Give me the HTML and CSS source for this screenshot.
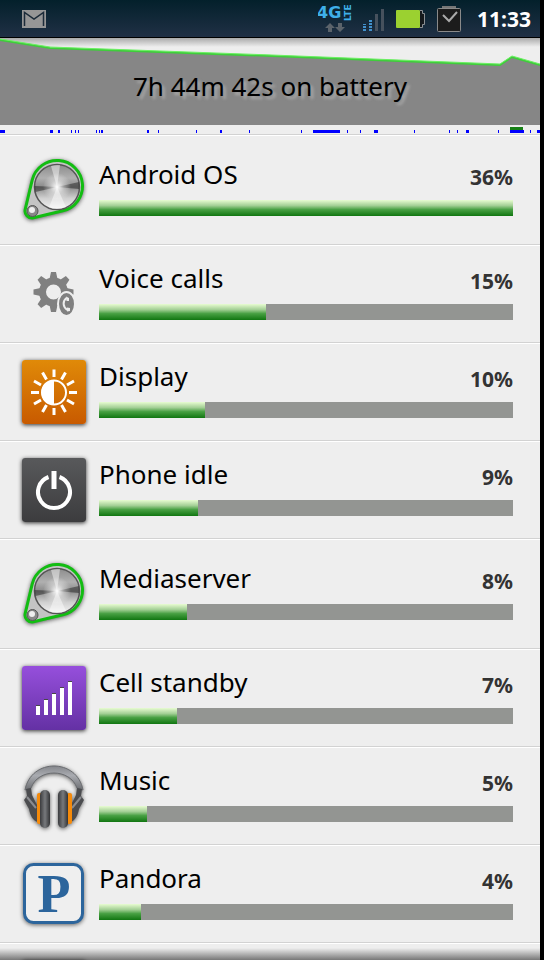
FILE: index.html
```html
<!DOCTYPE html>
<html lang="en">
<head>
  <meta charset="UTF-8" />
  <meta name="viewport" content="width=device-width, initial-scale=1.0" />
  <title>Battery use</title>
  <link rel="stylesheet" href="styles.css">
</head>
<body>
  <!-- shared gradients and the app icon that is used twice -->
  <svg class="defs" width="0" height="0" aria-hidden="true">
    <defs>
      <linearGradient id="metal" x1="0" y1="0" x2="0" y2="1">
        <stop offset="0" stop-color="#8c8c8c" />
        <stop offset="0.3" stop-color="#b0b0b0" />
        <stop offset="0.5" stop-color="#8a8a8a" />
        <stop offset="0.75" stop-color="#d0d0d0" />
        <stop offset="1" stop-color="#f4f4f4" />
      </linearGradient>
      <radialGradient id="shine">
        <stop offset="0" stop-color="#fff" />
        <stop offset="0.5" stop-color="#fff" stop-opacity="0.4" />
        <stop offset="1" stop-color="#fff" stop-opacity="0" />
      </radialGradient>
      <linearGradient id="band" x1="0" y1="0" x2="0" y2="1">
        <stop offset="0" stop-color="#85878c" />
        <stop offset="0.4" stop-color="#a9abb0" />
        <stop offset="1" stop-color="#6c6e72" />
      </linearGradient>
      <linearGradient id="cup" x1="0" y1="0" x2="1" y2="0">
        <stop offset="0" stop-color="#3a3b3e" />
        <stop offset="0.5" stop-color="#77797c" />
        <stop offset="1" stop-color="#333436" />
      </linearGradient>
      <symbol id="belt" viewBox="0 0 64 64">
        <path d="M10.200 22.100A25.500 25.500 0 1 1 40.900 52.800L11.600 59.800A7 7 0 0 1 3.200 51.400Z" fill="#c4c4c4" stroke="#12bd12" stroke-width="3" stroke-linejoin="round" />
        <circle cx="35" cy="29" r="22.500" fill="url(#metal)" stroke="#555" stroke-width="1.500" />
        <path d="M35 29L12.500 28A22 22 0 0 0 13.500 34Z M35 29L57 24A22 22 0 0 1 57 31Z" fill="#222" opacity="0.5" />
        <path d="M35 29L29 8A22 22 0 0 1 38 7Z M35 29L27 49.500A22 22 0 0 0 44 49Z" fill="#fff" opacity="0.45" />
        <circle cx="35" cy="29" r="14" fill="url(#shine)" />
        <circle cx="10.500" cy="53" r="5.500" fill="#888" stroke="#555" />
        <circle cx="10" cy="52" r="3" fill="#eee" />
      </symbol>
    </defs>
  </svg>

  <div class="screen">
    <header class="status-bar">
      <svg class="mail" width="24" height="18" viewBox="0 0 24 18" role="img" aria-label="New mail">
        <rect width="24" height="18" fill="#969696" />
        <path d="M2.500 16V2.500L12 9L21.500 2.500V16" fill="none" stroke="#1c2b39" stroke-width="1.500" />
      </svg>
      <svg class="network" width="36" height="30" viewBox="0 0 36 30">
        <text x="-1" y="14" class="net-type">4G</text>
        <text x="-17" y="33" class="net-lte" transform="rotate(-90)">LTE</text>
        <path d="M12 19L17 24H14V28H10V24H7Z M22 28L27 23H24V19H20V23H17Z" fill="#5b636b" />
      </svg>
      <svg class="signal" width="22" height="22" viewBox="0 0 22 22" role="img" aria-label="Signal strength">
        <path d="M1.500 22V15M7.500 22V10" stroke="#4291cc" stroke-width="3" stroke-dasharray="2 1" />
        <path d="M13.500 22V5M19.500 22V0" stroke="#46515d" stroke-width="3" />
      </svg>
      <svg class="battery" width="30" height="18" viewBox="0 0 30 18" role="img" aria-label="Battery level">
        <rect width="24" height="18" rx="1" fill="#9bd130" />
        <path d="M24 0.500H26.500V3.500H28.500V14.500H26.500V17.500H24" fill="#15191c" stroke="#8c9094" />
      </svg>
      <svg class="task" width="24" height="26" viewBox="0 0 24 26" role="img" aria-label="Tasks">
        <rect x="5" y="0" width="14" height="3" fill="#777" />
        <rect x="0.500" y="2.500" width="23" height="23" rx="1" fill="#1c1c1c" stroke="#8a8a8a" />
        <path d="M6 9L12 15L20 6" fill="none" stroke="#aaa" stroke-width="2" />
      </svg>
      <time class="clock">11:33</time>
    </header>

    <section class="history">
      <div class="graph">
        <svg class="curve" viewBox="0 0 540 87" preserveAspectRatio="none" aria-hidden="true">
          <path d="M0 2L50 10L272 18L500 27L512 19L540 27V87H0Z" fill="#868686" />
          <path d="M0 2L50 10L272 18L500 27L512 19L540 27" fill="none" stroke="#3fce3b" stroke-width="2" />
          <path d="M0 1L50 9L272 17L500 26L512 18L540 26" fill="none" stroke="#6cf063" stroke-width="1" />
        </svg>
        <h1 class="duration">7h 44m 42s on battery</h1>
      </div>
      <svg class="ticks" viewBox="0 0 540 9" preserveAspectRatio="none" aria-hidden="true">
        <path d="M0 5h5v3h-5zM50 5h3v3h-3zM58 5h2v3h-2zM71 5h1v3h-1zM75 5h1v3h-1zM78 5h1v3h-1zM96 5h1v3h-1zM99 5h1v3h-1zM101 5h2v3h-2zM147 5h2v3h-2zM158 5h1v3h-1zM196 5h1v3h-1zM220 5h2v3h-2zM249 5h1v3h-1zM301 5h1v3h-1zM313 5h27v3h-27zM347 5h1v3h-1zM360 5h1v3h-1zM374 5h4v3h-4zM414 5h1v3h-1zM449 5h1v3h-1zM457 5h1v3h-1zM466 5h3v3h-3zM498 5h1v3h-1zM510 5h14v3h-14zM530 5h1v3h-1zM537 5h3v3h-3z" fill="#00f" />
        <path d="M510 2h13v3h-13z" fill="#168016" />
      </svg>
    </section>

    <ul class="usage-list">
      <li class="usage tall">
        <svg class="icon glow" aria-hidden="true"><use href="#belt" /></svg>
        <div class="details">
          <div class="label"><span class="name">Android OS</span><span class="percent">36%</span></div>
          <div class="bar"><div class="fill" style="width: 100%"></div></div>
        </div>
      </li>
      <li class="usage">
        <svg class="icon" viewBox="0 0 64 64" aria-hidden="true">
          <g transform="translate(31.500 30)" fill="#808080">
            <circle r="11" fill="none" stroke="#808080" stroke-width="7" />
            <g id="teeth">
              <path d="M-4 -13L-2.500 -20H2.500L4 -13Z" />
              <path d="M-4 13L-2.500 20H2.500L4 13Z" />
              <path d="M-13 -4L-20 -2.500V2.500L-13 4Z" />
              <path d="M13 -4L20 -2.500V2.500L13 4Z" />
            </g>
            <use href="#teeth" transform="rotate(45)" />
          </g>
          <ellipse cx="44.500" cy="42" rx="8.500" ry="12" fill="#808080" stroke="#eee" stroke-width="2" />
          <path d="M44.500 36C40.500 39 40.500 45 45.500 48" fill="none" stroke="#eee" stroke-width="2" />
          <path d="M44 34.500L47 36V39H44.500ZM45 45.500L48 46V49L45 49.500Z" fill="#eee" />
        </svg>
        <div class="details">
          <div class="label"><span class="name">Voice calls</span><span class="percent">15%</span></div>
          <div class="bar"><div class="fill" style="width: 40.3%"></div></div>
        </div>
      </li>
      <li class="usage">
        <svg class="icon tile orange" viewBox="0 0 64 64" aria-hidden="true">
          <g fill="none" stroke="#fff" stroke-width="3">
            <path d="M32 9.500V17M32 48V55M9 32.500H17M47 32.500H55M20.500 12.500L24.500 19.500M43.500 12.500L39.500 19.500M20.500 52L24.500 45M43.500 52L39.500 45M12 21L19 25M52 21L45 25M12 44L19 40M52 44L45 40" />
            <circle cx="32" cy="32.500" r="12" stroke-width="2" />
          </g>
          <path d="M32 20A12.500 12.500 0 0 0 32 45Z" fill="#fff" />
        </svg>
        <div class="details">
          <div class="label"><span class="name">Display</span><span class="percent">10%</span></div>
          <div class="bar"><div class="fill" style="width: 25.6%"></div></div>
        </div>
      </li>
      <li class="usage">
        <svg class="icon tile dark" viewBox="0 0 64 64" aria-hidden="true">
          <g fill="none" stroke="#fff" stroke-width="4">
            <path d="M26.500 19A16 16 0 1 0 37.500 19" />
            <path d="M32 13V31" stroke-width="5" />
          </g>
        </svg>
        <div class="details">
          <div class="label"><span class="name">Phone idle</span><span class="percent">9%</span></div>
          <div class="bar"><div class="fill" style="width: 23.9%"></div></div>
        </div>
      </li>
      <li class="usage tall">
        <svg class="icon glow" aria-hidden="true"><use href="#belt" /></svg>
        <div class="details">
          <div class="label"><span class="name">Mediaserver</span><span class="percent">8%</span></div>
          <div class="bar"><div class="fill" style="width: 21.3%"></div></div>
        </div>
      </li>
      <li class="usage">
        <svg class="icon tile purple" viewBox="0 0 64 64" aria-hidden="true">
          <path d="M14 40h4M22 34h4M30 28h4M38 22h4M46 16h4" stroke="#474747" stroke-width="2" />
          <path d="M14 40h4v9h-4zM22 34h4v15h-4zM30 28h4v21h-4zM38 22h4v27h-4zM46 16h4v33h-4z" fill="#fff" />
        </svg>
        <div class="details">
          <div class="label"><span class="name">Cell standby</span><span class="percent">7%</span></div>
          <div class="bar"><div class="fill" style="width: 18.8%"></div></div>
        </div>
      </li>
      <li class="usage">
        <svg class="icon glow" viewBox="0 0 64 64" aria-hidden="true">
          <path d="M3 26C9 -6 55 -6 61 26L55 24C48 4 16 4 9 24Z" fill="url(#band)" stroke="#6a6c70" />
          <path d="M4 25L9 24L10 31L16 43V58C11 57 8 51 7 45L2 36L5 32Z" fill="#4b4c4f" />
          <path d="M60 25L55 24L54 31L48 43V58C53 57 56 51 57 45L62 36L59 32Z" fill="#4b4c4f" />
          <path d="M5 33L14 44M59 33L50 44" stroke="#8a8b8f" stroke-width="2" />
          <rect x="15" y="29" width="5" height="31" rx="2" fill="#f58a0a" />
          <rect x="45" y="29" width="5" height="31" rx="2" fill="#f58a0a" />
          <rect x="18" y="26" width="10" height="38" rx="5" fill="url(#cup)" />
          <rect x="36" y="26" width="10" height="38" rx="5" fill="url(#cup)" />
        </svg>
        <div class="details">
          <div class="label"><span class="name">Music</span><span class="percent">5%</span></div>
          <div class="bar"><div class="fill" style="width: 11.6%"></div></div>
        </div>
      </li>
      <li class="usage">
        <svg class="icon glow" viewBox="0 0 64 64" aria-hidden="true">
          <rect x="2.500" y="2.500" width="58" height="58" rx="9" fill="#efefef" stroke="#2c659c" stroke-width="3" />
          <text x="32" y="50" class="pandora-letter">P</text>
        </svg>
        <div class="details">
          <div class="label"><span class="name">Pandora</span><span class="percent">4%</span></div>
          <div class="bar"><div class="fill" style="width: 10.1%"></div></div>
        </div>
      </li>
      <li class="usage">
        <svg class="icon tile dark" viewBox="0 0 64 64" aria-hidden="true"></svg>
      </li>
    </ul>
  </div>
</body>
</html>
```
FILE: styles.css
```css
* {
  margin: 0;
  padding: 0;
  box-sizing: border-box;
}
body {
  background: #000;
  font-family: "Noto Sans", "Open Sans", sans-serif;
  color: #000;
  overflow: hidden;
}
.defs {
  position: absolute;
}
.screen {
  position: relative;
  display: flex;
  flex-direction: column;
  height: 100vh;
  margin-right: 4px;
  background: #eee;
  overflow: hidden;
}
/* fade at the bottom edge of the scrolling list */
.screen::after {
  content: "";
  position: absolute;
  left: 0;
  right: 0;
  bottom: 0;
  height: 12px;
  background: linear-gradient(rgba(0, 0, 0, 0), rgba(0, 0, 0, 0.5));
}

/* status bar */
.status-bar {
  display: flex;
  align-items: center;
  flex-shrink: 0;
  height: 38px;
  padding: 0 9px 0 22px;
  background: linear-gradient(#03202b, #203045);
  border-bottom: 1px solid #000;
}
.mail {
  margin-right: auto;
}
.network {
  margin-right: 9px;
}
.signal {
  margin: 3px 11px 0 0;
}
.battery {
  margin-right: 11px;
}
.task {
  margin-right: 16px;
}
.net-type {
  font: bold 16px "DejaVu Sans", sans-serif;
  fill: #3fb0ea;
}
.net-lte {
  font: bold 9px "DejaVu Sans", sans-serif;
  fill: #3fb0ea;
}
.clock {
  font-size: 21px;
  font-weight: 700;
  line-height: 28px;
  color: #fff;
}

/* battery history */
.history {
  flex-shrink: 0;
  border-bottom: 1px solid #d2d2d2;
  box-shadow: 0 1px 0 #fff;
}
.graph {
  display: grid;
  height: 87px;
  background: linear-gradient(#aaa, #eee 9px);
}
.curve, .duration {
  grid-area: 1 / 1;
}
.curve {
  width: 100%;
  height: 87px;
}
.duration {
  align-self: center;
  padding-top: 8px;
  text-align: center;
  font-size: 26px;
  font-weight: 400;
  line-height: 32px;
  text-shadow: 3px 3px 3px #aaa;
}
.ticks {
  display: block;
  width: 100%;
  height: 9px;
}

/* usage rows */
.usage-list {
  list-style: none;
}
.usage {
  display: flex;
  gap: 13px;
  padding: 17px 27px 16px 22px;
  border-bottom: 1px solid #d2d2d2;
  box-shadow: 0 1px 0 #fff;
}
.usage.tall {
  padding-top: 23px;
  padding-bottom: 22px;
}
.icon {
  flex-shrink: 0;
  width: 64px;
  height: 64px;
}
.glow {
  filter: drop-shadow(0 1px 2px rgba(0, 0, 0, 0.6));
}
.tile {
  border-radius: 3px;
  box-shadow: 0 1px 4px rgba(0, 0, 0, 0.8);
}
.orange {
  background: linear-gradient(#e08a08, #c85a00);
}
.dark {
  background: linear-gradient(#58595b, #3c3c3e);
}
.purple {
  background: linear-gradient(#964fdc, #6431a4);
}
.pandora-letter {
  font: bold 54px "Liberation Serif", serif;
  fill: #2c659c;
  text-anchor: middle;
}
.details {
  flex: 1;
  min-width: 0;
}
.label {
  display: flex;
  justify-content: space-between;
  align-items: flex-end;
  margin-bottom: 10px;
}
.name {
  font-size: 26px;
  line-height: 32px;
}
.percent {
  font-size: 21px;
  font-weight: 700;
  line-height: 26px;
  color: #333;
}
.bar {
  height: 16px;
  background: #939592;
}
.fill {
  height: 100%;
  background: linear-gradient(#e8fcd2, #a3cf95 35%, #48a043 60%, #117611);
}
```
